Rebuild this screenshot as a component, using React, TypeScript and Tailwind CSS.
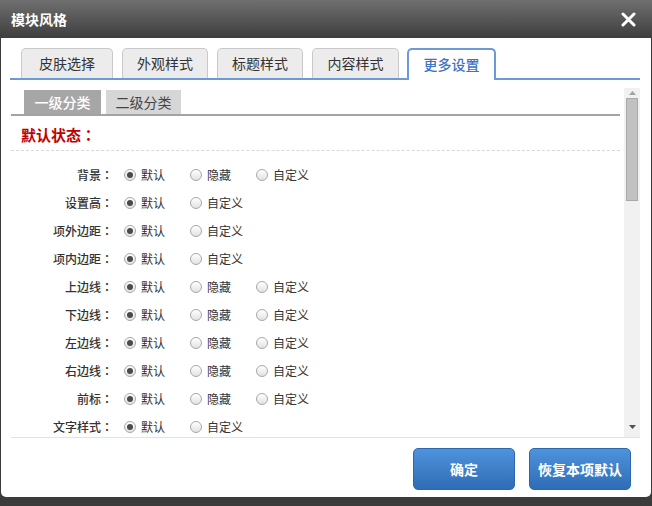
import React from "react";

const font = { fontFamily: '"Noto Sans CJK SC", "Noto Sans", sans-serif' };
const tcFont = { fontFamily: '"Noto Sans CJK TC", "Noto Sans CJK SC", sans-serif' };

type Row = { label: string; opts: string[] };
const rows: Row[] = [
  { label: "背景", opts: ["默认", "隐藏", "自定义"] },
  { label: "设置高", opts: ["默认", "自定义"] },
  { label: "项外边距", opts: ["默认", "自定义"] },
  { label: "项内边距", opts: ["默认", "自定义"] },
  { label: "上边线", opts: ["默认", "隐藏", "自定义"] },
  { label: "下边线", opts: ["默认", "隐藏", "自定义"] },
  { label: "左边线", opts: ["默认", "隐藏", "自定义"] },
  { label: "右边线", opts: ["默认", "隐藏", "自定义"] },
  { label: "前标", opts: ["默认", "隐藏", "自定义"] },
  { label: "文字样式", opts: ["默认", "自定义"] },
];

function Radio({ checked }: { checked?: boolean }) {
  return (
    <span className="flex h-[12px] w-[12px] shrink-0 items-center justify-center rounded-full border border-[#a8a8a8] bg-gradient-to-b from-[#ffffff] to-[#e2e2e2]">
      {checked && <span className="h-[6px] w-[6px] rounded-full bg-[#4a4a4a]" />}
    </span>
  );
}

const tabs = [
  { t: "皮肤选择", w: "w-[92px]" },
  { t: "外观样式", w: "w-[86px]" },
  { t: "标题样式", w: "w-[86px]" },
  { t: "内容样式", w: "w-[87px]" },
];

export default function App() {
  return (
    <div className="h-[506px] w-[652px] overflow-hidden bg-[#3b3b3b]" style={font}>
      <div className="flex h-[38px] items-center justify-between bg-gradient-to-b from-[#707070] to-[#3e3e3e] pl-[11px] pr-[16px]">
        <span className="text-[14px] font-bold text-white">模块风格</span>
        <svg width="15" height="15" viewBox="0 0 15 15">
          <path d="M2 2 L13 13 M13 2 L2 13" stroke="#fff" strokeWidth="3" strokeLinecap="round" />
        </svg>
      </div>
      <div className="ml-[1px] flex h-[459px] w-[650px] flex-col rounded-b-[5px] bg-white">
        <div className="ml-[9px] mt-[10px] flex w-[630px] items-end gap-[8px] border-b-2 border-[#6b9ad6] pl-[11px]">
          {tabs.map((tb, i) => (
            <div
              key={i}
              className={`flex h-[30px] ${tb.w} items-center justify-center rounded-t-[5px] border border-b-0 border-[#c9c9c9] bg-[#ececec] text-[14px] text-[#333] ${i > 0 ? "ml-[1px]" : ""}`}
            >
              {tb.t}
            </div>
          ))}
          <div className="-mb-[2px] flex h-[32px] w-[89px] items-center justify-center rounded-t-[5px] border-2 border-b-0 border-[#6b9ad6] bg-white pb-[2px] text-[14px] font-medium text-[#3d73c4]">
            更多设置
          </div>
        </div>
        <div className="ml-[10px] mt-[8px] flex h-[350px] w-[629px] gap-[4px] border-b border-[#e3e3e3]">
          <div className="flex w-[609px] flex-col overflow-hidden pt-[2px]">
            <div className="flex gap-[5px] border-b-2 border-[#a3a3a3] pl-[13px]">
              <div className="flex h-[24px] w-[77px] items-center justify-center bg-[#a6a6a6] text-[14px] font-medium text-white">一级分类</div>
              <div className="flex h-[24px] w-[75px] items-center justify-center bg-[#d6d6d6] text-[14px] text-[#444]">二级分类</div>
            </div>
            <div className="border-b border-dashed border-[#d8d8d8] pb-[6px] pl-[10px] pt-[10px] text-[15px] font-bold leading-[18px] text-[#c00000]">
              默认状态<span style={tcFont}>：</span>
            </div>
            <div className="mt-[10px] flex flex-col">
              {rows.map((r, i) => (
                <div key={i} className="flex h-[28px] shrink-0 items-center text-[12px] text-[#333]">
                  <div className="w-[102px] text-right font-medium text-[#333]">
                    {r.label}
                    <span style={tcFont}>：</span>
                  </div>
                  <div className="ml-[11px] flex items-center">
                    {r.opts.map((o, j) => (
                      <div key={j} className="flex w-[66px] items-center gap-[5px]">
                        <Radio checked={j === 0} />
                        <span>{o}</span>
                      </div>
                    ))}
                  </div>
                </div>
              ))}
            </div>
          </div>
          <div className="flex w-[16px] flex-col bg-[#f1f1f1]">
            <div className="flex h-[9px] items-center justify-center">
              <svg width="7" height="4" viewBox="0 0 7 4"><path d="M0 4 L3.5 0 L7 4 Z" fill="#a3a3a3" /></svg>
            </div>
            <div className="mx-[2px] mt-[1px] h-[103px] border border-[#a9a9a9] bg-[#c1c1c1]" />
            <div className="flex-1" />
            <div className="flex h-[16px] items-center justify-center pb-[4px]">
              <svg width="7" height="4" viewBox="0 0 7 4"><path d="M0 0 L7 0 L3.5 4 Z" fill="#505050" /></svg>
            </div>
          </div>
        </div>
        <div className="flex justify-end gap-[14px] pr-[20px] pt-[10px]">
          <button className="flex h-[42px] w-[102px] items-center justify-center rounded-[5px] border border-[#2d67ad] bg-gradient-to-b from-[#4e93dc] to-[#2f6db6] text-[14px] font-bold text-white">
            确定
          </button>
          <button className="flex h-[42px] w-[102px] items-center justify-center rounded-[5px] border border-[#2d67ad] bg-gradient-to-b from-[#4e93dc] to-[#2f6db6] text-[14px] font-bold text-white">
            恢复本项默认
          </button>
        </div>
      </div>
    </div>
  );
}
